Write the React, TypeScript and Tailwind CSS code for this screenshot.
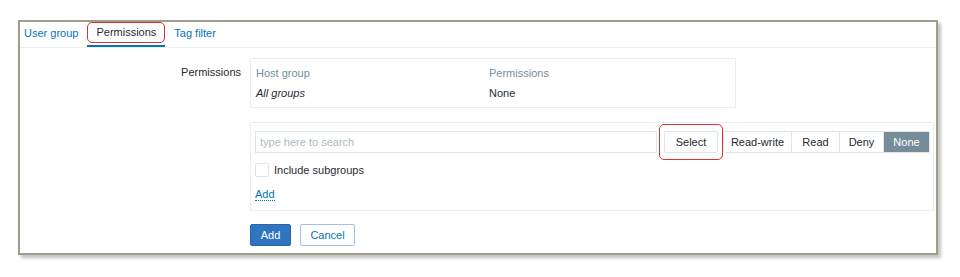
export default function App() {
  return (
    <div className="min-h-[277px] bg-white pt-[20px] pl-[18px] font-['Liberation_Sans',Arial,sans-serif] text-[11px] text-[#1f2c33]">
      <div className="w-[920px] h-[235px] border-2 border-[#9d9e8c] bg-white shadow-[3px_3px_3px_rgba(120,120,110,0.45)]">
        {/* tabs */}
        <div className="flex items-end h-[26px] border-b border-[#ebeef0] pl-[4px]">
          <a className="pb-[6px] text-[#0275b8]">User group</a>
          <div className="ml-[9px] flex flex-col">
            <span className="border-[1.5px] border-[#d8342c] rounded-[5px] px-[8px] h-[21px] leading-[19px] text-[#1f2c33]">Permissions</span>
            <span className="h-[2px] mt-[2px] bg-[#0275b8]" />
          </div>
          <a className="ml-[9px] pb-[6px] text-[#0275b8]">Tag filter</a>
        </div>

        {/* form */}
        <div className="grid grid-cols-[221px_1fr] gap-x-[9px] pt-[10px]">
          <div className="text-right pt-[6px]">Permissions</div>
          <div className="w-[486px] h-[50px] border border-[#ebeef0] px-[5px] pt-[4px]">
            <div className="grid grid-cols-[233px_1fr] leading-[20px]">
              <span className="text-[#768d99]">Host group</span>
              <span className="text-[#768d99]">Permissions</span>
              <span className="italic">All groups</span>
              <span>None</span>
            </div>
          </div>

          <div />
          <div className="mt-[14px] w-[684px] h-[89px] border border-[#ebeef0] pl-[4px] pr-[3px] pt-[8px]">
            <div className="flex items-center h-[22px]">
              <input
                className="w-[402px] h-[22px] border border-[#dfe4e7] px-[4px] text-[11px] outline-none placeholder:text-[#acbbc2]"
                placeholder="type here to search"
              />
              <div className="ml-[2px] -my-[8px] flex items-center border-[1.5px] border-[#d8342c] rounded-[5px] px-[4px] py-[6px]">
                <button className="w-[54px] h-[22px] border border-[#dfe4e7] rounded-[2px] bg-white text-[#1f2c33]">Select</button>
              </div>
              <div className="flex h-[22px] border border-[#dfe4e7] rounded-[2px]">
                <span className="w-[68px] flex items-center justify-center border-r border-[#dfe4e7]">Read-write</span>
                <span className="w-[48px] flex items-center justify-center border-r border-[#dfe4e7]">Read</span>
                <span className="w-[44px] flex items-center justify-center border-r border-[#dfe4e7]">Deny</span>
                <span className="w-[45px] flex items-center justify-center bg-[#768d99] text-white">None</span>
              </div>
            </div>
            <div className="flex items-center mt-[9px]">
              <span className="w-[14px] h-[14px] border border-[#dfe4e7] rounded-[2px] bg-white" />
              <span className="ml-[5px]">Include subgroups</span>
            </div>
            <div className="mt-[8px] leading-[14px]">
              <a className="text-[#0275b8] border-b border-dotted border-[#0275b8]">Add</a>
            </div>
          </div>

          <div />
          <div className="flex gap-[9px] mt-[13px]">
            <button className="w-[41px] h-[22px] rounded-[2px] bg-[#2f75c0] text-white border border-[#2866a8]">Add</button>
            <button className="w-[55px] h-[22px] rounded-[2px] bg-white text-[#0275b8] border border-[#9fc3e8]">Cancel</button>
          </div>
        </div>
      </div>
    </div>
  );
}
